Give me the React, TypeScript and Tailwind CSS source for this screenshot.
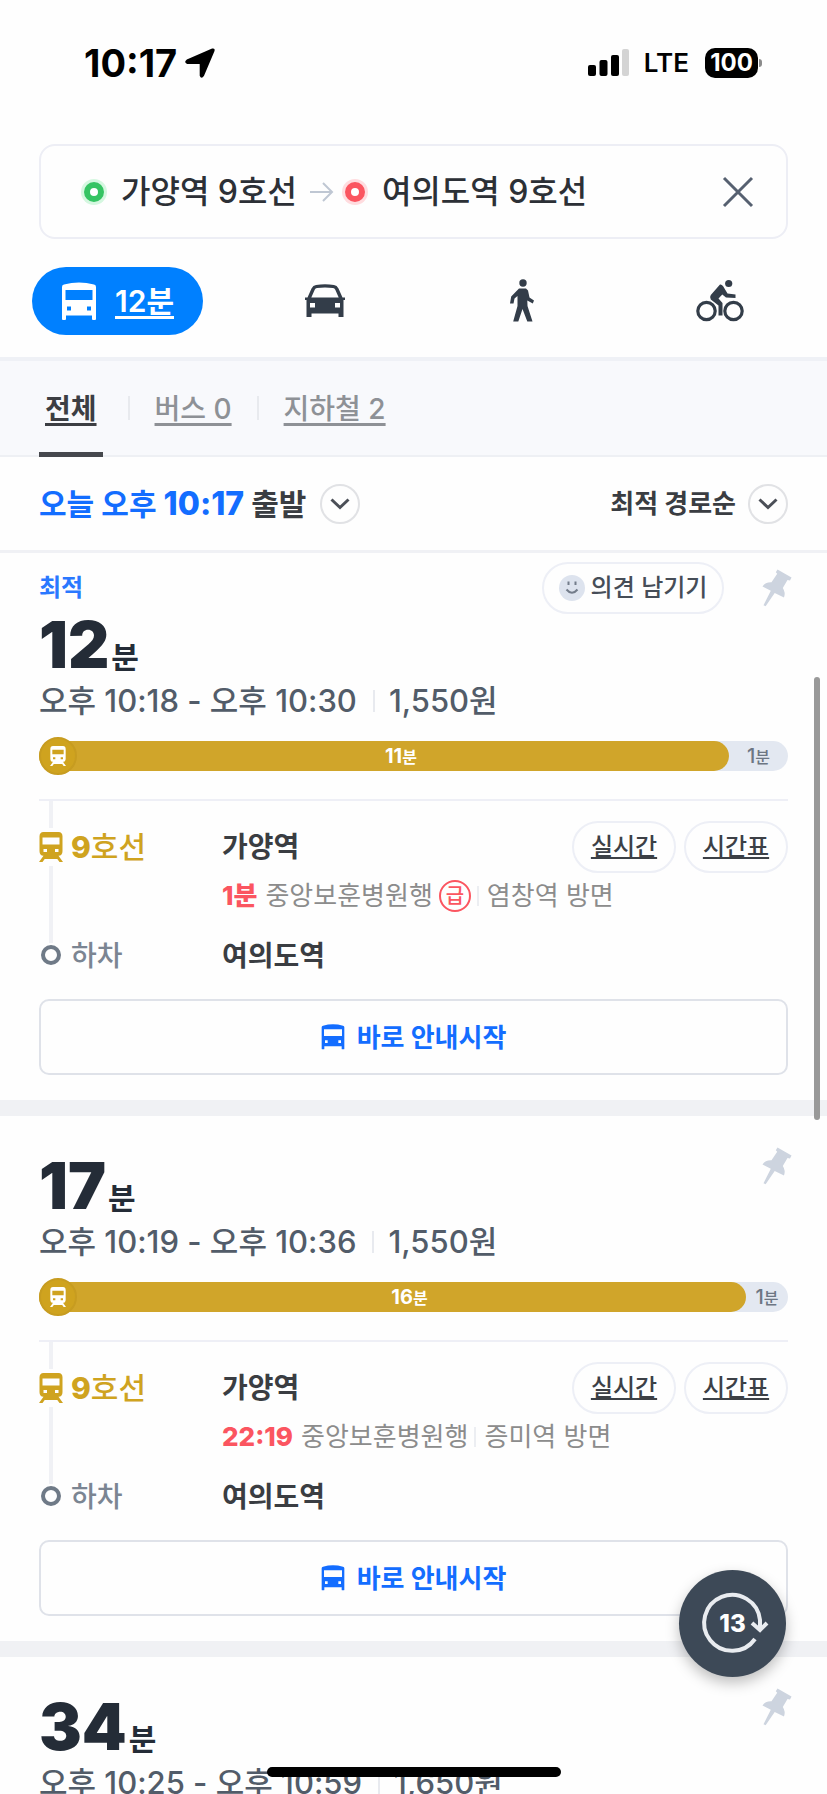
import type React from "react";

interface Route {
  id: number;
  label?: string;
  minutes: number;
  start: string;
  end: string;
  fare: string;
  rideMinutes?: number;
  ridePercent?: number;
  arrival?: string;
  express?: boolean;
  direction?: string;
}

interface IconProps {
  className?: string;
}

const routes: Route[] = [
  {
    id: 1,
    label: "최적",
    minutes: 12,
    start: "오후 10:18",
    end: "오후 10:30",
    fare: "1,550원",
    rideMinutes: 11,
    ridePercent: 92.1,
    arrival: "1분",
    express: true,
    direction: "염창역 방면",
  },
  {
    id: 2,
    minutes: 17,
    start: "오후 10:19",
    end: "오후 10:36",
    fare: "1,550원",
    rideMinutes: 16,
    ridePercent: 94.4,
    arrival: "22:19",
    direction: "증미역 방면",
  },
  {
    id: 3,
    minutes: 34,
    start: "오후 10:25",
    end: "오후 10:59",
    fare: "1,650원",
  },
];

const BusIcon = ({ className }: IconProps) => (
  <svg viewBox="0 0 36 38" className={className} fill="currentColor" aria-hidden="true">
    <path
      fillRule="evenodd"
      d="M1 5Q1 3 3 2.6Q18-1.8 33 2.6Q35 3 35 5V37Q35 38 34 38H32Q31 38 31 37V33.500H5V37Q5 38 4 38H2Q1 38 1 37ZM4.500 8V18H31.500V8ZM6 24.500V28.500H10V24.500ZM26 24.500V28.500H30V24.500Z"
    />
  </svg>
);

const CarIcon = ({ className }: IconProps) => (
  <svg viewBox="0 0 40 34" className={className} fill="currentColor" aria-hidden="true">
    <path
      fillRule="evenodd"
      d="M0 13.500H2.500L6.500 4.500Q8 1.300 11 1Q20-.3 29 1Q32 1.300 33.500 4.500L37.500 13.500H40V16H38.500V33H33.500V29.500H6.500V33H1.500V16H0ZM6.300 13.500H33.700L30.300 5.700Q29.600 4.200 28 4Q20 3 12 4Q10.400 4.200 9.700 5.700ZM5 19V23.500H10V19ZM30 19V23.500H35V19Z"
    />
  </svg>
);

const WalkIcon = ({ className }: IconProps) => (
  <svg viewBox="0 0 24 44" className={className} fill="currentColor" aria-hidden="true">
    <circle cx="13" cy="4" r="3.700" />
    <path d="M9 9.500H16L18 11.500L19.500 18.500L24 21.500L22.800 24.500L17.300 21.500L17.500 27L22.500 42.500H17.300L12.500 30L8.300 42.500H3.200L7.500 27V17L4.500 19.500L3.500 24.500H0L1.200 17.500Z" />
  </svg>
);

const BikeIcon = ({ className }: IconProps) => (
  <svg viewBox="0 0 48 44" className={className} fill="none" stroke="currentColor" aria-hidden="true">
    <circle cx="10.500" cy="32" r="8.700" strokeWidth="3.200" />
    <circle cx="37.500" cy="32" r="8.700" strokeWidth="3.200" />
    <circle cx="32.700" cy="4.500" r="3.600" fill="currentColor" stroke="none" />
    <path
      d="M24 5.500Q25.500 5 27 7L31.500 14.500L39.500 15.500V19L30 18.500L26.300 15.500L22.500 19.500L26.500 24V36.500H22.500V26.500L14.800 20.500Q13.200 18.500 14.800 16Z"
      fill="currentColor"
      stroke="none"
    />
  </svg>
);

const TrainIcon = ({ className }: IconProps) => (
  <svg viewBox="0 0 24 30" className={className} fill="currentColor" aria-hidden="true">
    <path
      fillRule="evenodd"
      d="M4.500 0H19.500Q23.500 0 23.500 4.500V19Q23.500 23.500 19.500 23.800L24 30H20.500L18.300 27H5.700L3.500 30H0L4.500 23.800Q.5 23.500 .5 19V4.500Q.5 0 4.500 0ZM3.500 5.500V12.500H20.500V5.500ZM4.500 17V20H8V17ZM16 17V20H19.500V17Z"
    />
  </svg>
);

const PinIcon = ({ className }: IconProps) => (
  <svg viewBox="0 0 30 38" className={className} fill="currentColor" aria-hidden="true">
    <path d="M15.500.5L29.500 8.500L28 11.500L25.500 11L20.800 19Q23.800 23.500 22 28.500L12.700 24L3.600 37.300L1.500 36.200L8.800 21.800L.5 17.500Q3.500 13 9.500 13.300L15.200 4.800L13.800 3.200Z" />
  </svg>
);

const ChevronCircle = () => (
  <span className="flex size-10 shrink-0 items-center justify-center rounded-full border-2 border-[#e1e2e5] text-[#4b4f57]">
    <svg viewBox="0 0 20 12" className="w-5" fill="none" stroke="currentColor" strokeWidth="3" aria-hidden="true">
      <path d="M1.500 1.500L10 9.500L18.500 1.500" />
    </svg>
  </span>
);

const StatusBar = () => (
  <header className="flex h-[126px] shrink-0 items-center justify-between pr-[65px] pl-[84px] text-black">
    <div className="flex items-center gap-2">
      <span className="text-[38px] leading-10 font-bold">10:17</span>
      <svg
        viewBox="0 0 30 30"
        className="size-[30px]"
        fill="currentColor"
        stroke="currentColor"
        strokeWidth="2"
        strokeLinejoin="round"
        aria-hidden="true"
      >
        <path d="M27.500 1.500Q29.200 1 28.500 2.800L18 27.500Q16.500 30 15.700 27.500V16Q15.500 15 14.500 15H2.500Q0 14 2.200 12.500Z" />
      </svg>
    </div>
    <div className="flex items-center">
      <svg viewBox="0 0 42 28" className="mr-[14px] w-[42px]" fill="currentColor" aria-hidden="true">
        <rect x="0" y="16" width="8" height="11" rx="2" />
        <rect x="11.500" y="11" width="8" height="16" rx="2" />
        <rect x="23" y="6" width="8" height="21" rx="2" />
        <rect x="34" y="0" width="7" height="27" rx="2" fill="#d4d4d4" />
      </svg>
      <span className="mr-4 text-[26px] leading-8 font-semibold">LTE</span>
      <span className="flex h-[30px] w-[53px] items-center justify-center rounded-[10px] bg-black text-2xl leading-none font-bold text-white">
        100
      </span>
      <span className="ml-px h-2 w-[3px] rounded-r-full bg-[#8b8b8b]" />
    </div>
  </header>
);

const SearchBar = () => (
  <div className="mx-[39px] mt-[18px] flex h-[95px] shrink-0 items-center rounded-2xl border-2 border-[#edeef5] pr-8 pl-10 text-[32px] leading-10 font-medium text-[#2c3036]">
    <span className="flex size-[26px] items-center justify-center rounded-full bg-[#d5f7e0]">
      <span className="size-5 rounded-full border-[6px] border-[#35c463] bg-white" />
    </span>
    <span className="ml-[14px] whitespace-nowrap">가양역 9호선</span>
    <svg viewBox="0 0 24 22" className="mr-2 ml-[13px] w-6" fill="none" stroke="#bfc7d3" strokeWidth="2" aria-hidden="true">
      <path d="M0 11H22M13 2L22 11L13 20" />
    </svg>
    <span className="flex size-[26px] items-center justify-center rounded-full bg-[#ffdcdf]">
      <span className="size-5 rounded-full border-[6px] border-[#fb5560] bg-white" />
    </span>
    <span className="ml-[14px] whitespace-nowrap">여의도역 9호선</span>
    <button type="button" aria-label="닫기" className="ml-auto text-[#566070]">
      <svg viewBox="0 0 32 32" className="size-8" fill="none" stroke="currentColor" strokeWidth="3" aria-hidden="true">
        <path d="M2 2L30 30M30 2L2 30" />
      </svg>
    </button>
  </div>
);

const ModeNav = () => (
  <nav className="grid shrink-0 grid-cols-4 items-center justify-items-center border-b-4 border-[#eff1f6] pt-7 pr-2 pb-[22px] pl-7 text-[#333d49]">
    <button
      type="button"
      className="ml-1 flex h-[68px] w-[171px] items-center justify-center gap-[18px] justify-self-start rounded-full bg-[#0080ff] text-white"
    >
      <BusIcon className="w-9" />
      <span className="text-[30px] leading-10 font-semibold underline decoration-3 underline-offset-4">12분</span>
    </button>
    <button type="button" aria-label="자동차">
      <CarIcon className="w-10" />
    </button>
    <button type="button" aria-label="도보">
      <WalkIcon className="w-6" />
    </button>
    <button type="button" aria-label="자전거">
      <BikeIcon className="w-12" />
    </button>
  </nav>
);

const Tabs = () => (
  <div className="flex h-24 shrink-0 items-stretch border-b-2 border-[#eef0f4] bg-[#f8f9fc] pl-[39px] text-[28px] leading-10 font-medium text-[#8e9196]">
    <button
      type="button"
      className="-mb-0.5 border-b-5 border-[#46484d] px-[6px] pt-1 font-bold text-[#3c3e43] underline decoration-3 underline-offset-4"
    >
      전체
    </button>
    <span className="mx-[25px] h-6 w-0.5 self-center bg-[#e8eaee]" />
    <button type="button" className="pt-0.5 underline decoration-3 underline-offset-4">
      버스 0
    </button>
    <span className="mx-[25px] h-6 w-0.5 self-center bg-[#e8eaee]" />
    <button type="button" className="pt-0.5 underline decoration-3 underline-offset-4">
      지하철 2
    </button>
  </div>
);

const SortBar = () => (
  <div className="flex h-24 shrink-0 items-center justify-between border-b-3 border-[#f0f1f5] px-[39px] text-[#3a3d42]">
    <button type="button" className="flex items-center gap-[14px] text-[30px] leading-10 font-bold">
      <span>
        <span className="text-[#136dff]">
          오늘 오후 <span className="text-[32px] font-extrabold">10:17</span>
        </span>{" "}
        출발
      </span>
      <ChevronCircle />
    </button>
    <button type="button" className="flex items-center gap-3 text-[26px] leading-10 font-bold">
      최적 경로순
      <ChevronCircle />
    </button>
  </div>
);

const PillButton = ({ children }: { children: React.ReactNode }) => (
  <button
    type="button"
    className="h-[52px] w-[104px] rounded-full border-2 border-[#edeff6] text-2xl font-medium text-[#3c4046] underline decoration-2 underline-offset-2"
  >
    {children}
  </button>
);

const DurationBar = ({ minutes, percent }: { minutes: number; percent: number }) => (
  <div className="mt-4 flex h-[38px] items-center">
    <div className="flex h-[30px] flex-1 rounded-full bg-[#e3e8f1] text-xl leading-[30px] font-bold">
      <div className="flex items-center rounded-full bg-[#d0a52a] text-white" style={{ width: `${percent}%` }}>
        <span className="flex size-[38px] shrink-0 items-center justify-center rounded-full border-2 border-[#c79c20] bg-[#cfa31f]">
          <TrainIcon className="w-4" />
        </span>
        <span className="flex-1 pr-1 text-center">
          {minutes}
          <span className="text-base">분</span>
        </span>
      </div>
      <span className="flex-1 text-center font-medium text-[#6d7683]">
        1<span className="text-base">분</span>
      </span>
    </div>
  </div>
);

const RouteSteps = ({ route }: { route: Route }) => (
  <div className="mt-6 flex border-t-2 border-[#eeeff6]">
    {/* Rail with the line between boarding and alighting */}
    <div className="flex w-6 shrink-0 flex-col items-center pb-[11px]">
      <span className="h-[27px] w-1 bg-[#f0f1f5]" />
      <TrainIcon className="my-1 w-6 text-[#cfa31f]" />
      <span className="w-1 flex-1 bg-[#f0f1f5]" />
      <span className="mt-0.5 size-5 rounded-full border-4 border-[#6f7a87]" />
    </div>
    <div className="flex-1 pt-5 pl-2 text-[28px] leading-10">
      <div className="flex h-[52px] items-center">
        <span className="w-[151px] text-[30px] font-medium text-[#cfa31f]">
          <span className="font-extrabold">9</span>호선
        </span>
        <span className="font-bold text-[#3a3d42]">가양역</span>
        <div className="ml-auto flex gap-2">
          <PillButton>실시간</PillButton>
          <PillButton>시간표</PillButton>
        </div>
      </div>
      <div className="mt-[6px] flex h-[34px] items-center pl-[151px] text-[26px] whitespace-nowrap text-[#8c8c8c]">
        <span className="mr-2 font-extrabold text-[#fb5560]">{route.arrival}</span>
        중앙보훈병원행
        {route.express && (
          <span className="ml-[6px] flex size-8 items-center justify-center rounded-full border-2 border-[#fb5560] text-xl leading-none font-medium text-[#fb5560]">
            급
          </span>
        )}
        <span className="mr-2 ml-[6px] h-5 w-0.5 bg-[#eceef2]" />
        {route.direction}
      </div>
      <div className="mt-[23px] flex h-10 items-center">
        <span className="w-[151px] font-medium text-[#7b8592]">하차</span>
        <span className="font-bold text-[#3a3d42]">여의도역</span>
      </div>
    </div>
  </div>
);

const RouteCard = ({ route }: { route: Route }) => (
  <section className={route.label ? "px-[39px] pt-[9px]" : "border-t-16 border-[#f0f1f4] px-[39px] pt-6"}>
    <div className="flex items-start justify-between">
      <div>
        {route.label ? (
          <p className="text-2xl leading-[52px] font-bold text-[#2a78ff]">{route.label}</p>
        ) : (
          <div className="h-[15px]" />
        )}
        <h2 className="flex h-[62px] items-baseline text-[64px] leading-[62px] font-black text-[#242c37]">
          {route.minutes}
          <span className="ml-0.5 text-[30px] leading-10 font-bold">분</span>
        </h2>
      </div>
      <div className="-mr-1 flex h-[52px] items-center gap-[38px]">
        {route.label && (
          <button
            type="button"
            className="flex h-[52px] w-[182px] items-center justify-center gap-[6px] rounded-full border-2 border-[#edeff6] text-2xl font-medium whitespace-nowrap text-[#464d57]"
          >
            <svg viewBox="0 0 26 26" className="size-[26px]" fill="none" stroke="#737c8a" strokeWidth="2" aria-hidden="true">
              <circle cx="13" cy="13" r="13" fill="#dde3ee" stroke="none" />
              <path d="M9.500 6.500V10M16.500 6.500V10M7.500 14.500Q13 21 18.500 14.500" />
            </svg>
            의견 남기기
          </button>
        )}
        <button type="button" aria-label="고정" className="text-[#cdd4df]">
          <PinIcon className="w-[30px]" />
        </button>
      </div>
    </div>
    <p className="mt-[5px] flex items-center text-[31px] leading-10 font-medium whitespace-nowrap text-[#525c69]">
      {route.start} - {route.end}
      <span className="mr-[14px] ml-4 h-[22px] w-0.5 bg-[#e8eaef]" />
      {route.fare}
    </p>
    {route.rideMinutes && route.ridePercent && (
      <>
        <DurationBar minutes={route.rideMinutes} percent={route.ridePercent} />
        <RouteSteps route={route} />
        <button
          type="button"
          className="mt-[23px] mb-[25px] flex h-[76px] w-full items-center justify-center gap-3 rounded-[10px] border-2 border-[#dfe2e9] text-[26px] font-bold text-[#136dff]"
        >
          <BusIcon className="w-6" />
          바로 안내시작
        </button>
      </>
    )}
  </section>
);

const RefreshButton = () => (
  <button
    type="button"
    className="absolute right-[41px] bottom-[117px] flex size-[107px] items-center justify-center rounded-full bg-[#3d4957] text-white shadow-[0_6px_14px_rgba(0,0,0,0.25)]"
  >
    <svg viewBox="0 0 107 107" className="absolute inset-0" fill="none" stroke="#e9ecf0" strokeWidth="4" aria-hidden="true">
      <path d="M76 69A28 28 0 1 1 81 50V59" />
      <path d="M73 53L81 60L88 53" />
    </svg>
    <span className="text-2xl leading-none font-extrabold">13</span>
  </button>
);

const App: React.FC = () => {
  return (
    <div className="relative flex h-screen flex-col overflow-hidden bg-[#fefefe] font-['Inter','Noto_Sans_CJK_KR',sans-serif]">
      <StatusBar />
      <SearchBar />
      <ModeNav />
      <Tabs />
      <SortBar />
      <main>
        {routes.map((route) => (
          <RouteCard key={route.id} route={route} />
        ))}
      </main>
      {/* Scroll indicator */}
      <div className="absolute top-[677px] right-[7px] h-[443px] w-[6px] rounded-full bg-[#999999]" />
      <RefreshButton />
      {/* Home indicator */}
      <div className="absolute bottom-[17px] left-1/2 h-[10px] w-[294px] -translate-x-1/2 rounded-full bg-black" />
    </div>
  );
};

export default App;
